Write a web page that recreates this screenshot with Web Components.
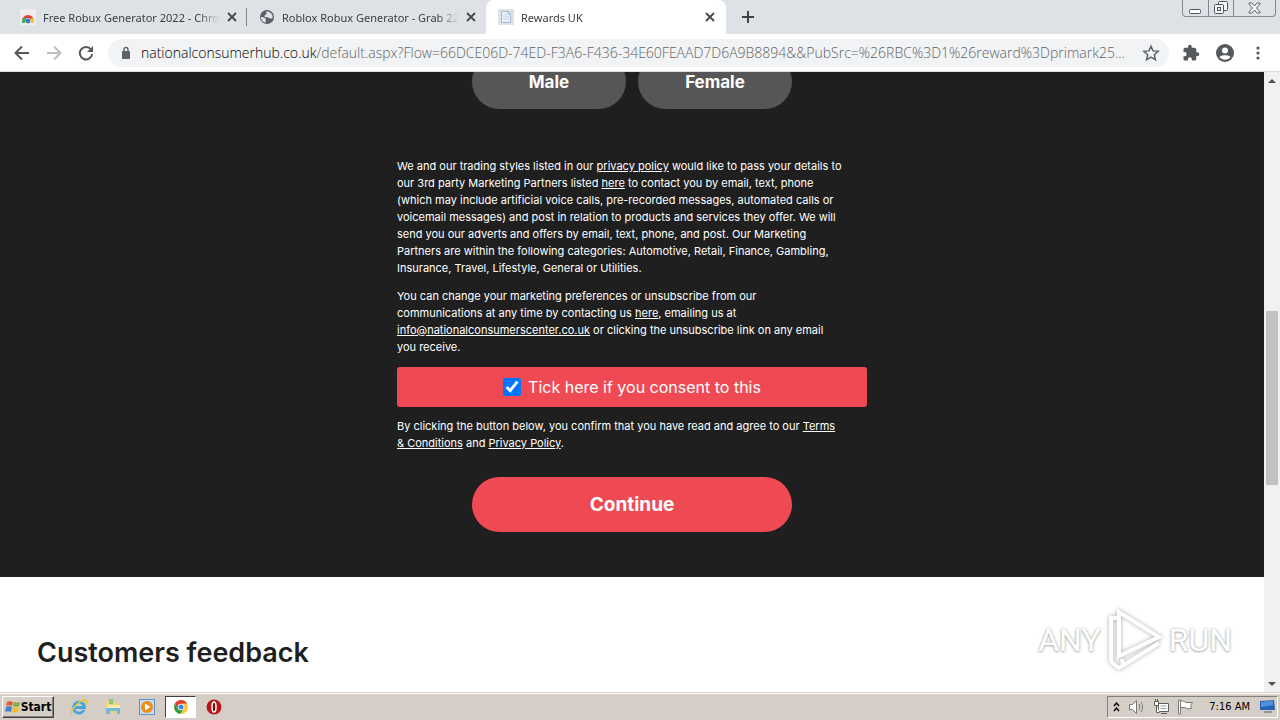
<!DOCTYPE html>
<html lang="en">
<head>
<meta charset="utf-8">
<title>Rewards UK</title>
<style>
  html, body {
    height: 100%;
    margin: 0;
  }
  body {
    display: flex;
    flex-direction: column;
    overflow: hidden;
    font-family: "Noto Sans", sans-serif;
    background: #fff;
  }
</style>
</head>
<body>
<tab-strip>
  <browser-tab>
    <svg slot="icon" width="16" height="16" viewBox="0 0 16 16"><rect width="16" height="16" rx="1" fill="#f1eded"/><path d="M2 12a6 6 0 0 1 12 0H11a3 3 0 0 0-6 0z" fill="#dc4437"/><path d="M2 12c0-2 1-3 2-4l2 3-1 3H2z" fill="#4caf50"/><path d="M14 12c0-1 0-2-1-3l-3 1 1 4h3z" fill="#f6c52e"/><circle cx="8" cy="12" r="2.4" fill="#3c79d8"/></svg>
    Free Robux Generator 2022 - Chrome
  </browser-tab>
  <browser-tab>
    <svg slot="icon" width="16" height="16" viewBox="0 0 16 16"><circle cx="8" cy="8" r="7" fill="#5b5f65"/><path d="M2.500 8c2 0 3 .5 4 1.500s-.5 2 .5 4C4 13.500 2 11 2 8zM7 2.500c0 1.500 1 1.500.500 2.500S5 6 5.500 7.500 9 8 10 9s2.500.500 3.500 0C14.500 5.500 11 2 7 2.500z" fill="#dee1e6"/></svg>
    Roblox Robux Generator - Grab 22.5
  </browser-tab>
  <browser-tab active>
    <svg slot="icon" width="16" height="16" viewBox="0 0 16 16"><rect width="16" height="16" fill="#e2e3e5"/><path d="M3.500 2.500h7l2 2v9h-9z" fill="#e9f3fb" stroke="#a3b6ca"/><path d="M10 3v2h2.500" fill="none" stroke="#a3b6ca"/><path d="M5 6h4M5 8h6M5 10h6" stroke="#c3d9ea"/></svg>
    Rewards UK
  </browser-tab>
</tab-strip>
<address-bar host="nationalconsumerhub.co.uk" path="/default.aspx?Flow=66DCE06D-74ED-F3A6-F436-34E60FEAAD7D6A9B8894&amp;&amp;PubSrc=%26RBC%3D1%26reward%3Dprimark25..."></address-bar>
<page-view>
  <signup-form>
    <pill-button slot="gender" tone="grey">Male</pill-button>
    <pill-button slot="gender" tone="grey">Female</pill-button>
    <pill-button slot="submit" size="large">Continue</pill-button>
  </signup-form>
  <feedback-section>Customers feedback</feedback-section>
  <run-watermark slot="overlay"></run-watermark>
</page-view>
<task-bar></task-bar>

<script>
function define(name, html, setup) {
  const template = document.createElement("template");
  template.innerHTML = html;
  customElements.define(name, class extends HTMLElement {
    constructor() {
      super();
      this.attachShadow({ mode: "open" }).append(template.content.cloneNode(true));
    }

    connectedCallback() {
      if (setup) setup(this, this.shadowRoot);
    }
  });
}

define("browser-tab", `
  <style>
    :host {
      display: flex;
      align-items: center;
      box-sizing: border-box;
      flex: 0 1 239px;
      min-width: 0;
      height: 34px;
      padding: 0 7px 0 12px;
      position: relative;
      font-size: 11px;
      color: #3c4043;
    }
    :host(:not([active]))::after {
      content: "";
      position: absolute;
      right: 0;
      top: 8px;
      width: 1px;
      height: 18px;
      background: #808387;
    }
    :host(:nth-child(2))::after { display: none; }
    :host([active]) {
      flex-basis: 240px;
      padding-right: 8px;
      background: #fff;
      border-radius: 8px 8px 0 0;
    }
    .title {
      flex: 1;
      margin: 0 4px 0 7px;
      overflow: hidden;
      white-space: nowrap;
      -webkit-mask-image: linear-gradient(90deg, #000 88%, transparent);
    }
    button {
      display: flex;
      padding: 3px;
      border: 0;
      background: none;
    }
  </style>
  <slot name="icon"></slot>
  <div class="title"><slot></slot></div>
  <button aria-label="Close tab"><svg width="10" height="10" viewBox="0 0 10 10"><path d="M1 1l8 8M9 1l-8 8" stroke="#45484c" stroke-width="1.800"/></svg></button>
`);

define("tab-strip", `
  <style>
    :host {
      display: flex;
      flex: none;
      height: 34px;
      padding-left: 8px;
      background: #dee1e6;
    }
    button {
      border: 0;
      background: none;
      padding: 0;
    }
    .add {
      display: flex;
      align-items: center;
      margin-left: 16px;
    }
    .window {
      display: flex;
      margin: 0 4px 0 auto;
      height: 16px;
      border: 1px solid #85898f;
      border-top: 0;
      border-radius: 0 0 4px 4px;
    }
    .window button {
      display: grid;
      place-items: center;
      width: 25px;
    }
    .window button + button { border-left: 1px solid #85898f; }
    .window button:last-child { width: 42px; }
  </style>
  <slot></slot>
  <button class="add" aria-label="New tab"><svg width="12" height="12" viewBox="0 0 12 12"><path d="M6 0v12M0 6h12" stroke="#3c4043" stroke-width="2"/></svg></button>
  <div class="window">
    <button aria-label="Minimize"><svg width="13" height="14" viewBox="0 0 13 14"><rect x=".5" y="8.500" width="11" height="4" rx="1" fill="#fff" stroke="#50545a"/></svg></button>
    <button aria-label="Restore"><svg width="14" height="14" viewBox="0 0 14 14" fill="#f5f6f8" stroke="#50545a"><rect x="4.500" y=".5" width="9" height="9" rx="1"/><rect x=".5" y="3.500" width="9" height="9" rx="1"/><rect x="3.500" y="6.500" width="3" height="3"/></svg></button>
    <button aria-label="Close"><svg width="13" height="12" viewBox="0 0 13 12"><path d="M1 1h3l2.500 3L9 1h3v1L8.500 6l3.500 4v1H9L6.500 8 4 11H1v-1l3.500-4L1 2z" fill="#f5f6f8" stroke="#60646a"/></svg></button>
  </div>
`);

define("address-bar", `
  <style>
    :host {
      display: flex;
      flex: none;
      align-items: center;
      box-sizing: border-box;
      height: 38px;
      padding: 0 14px;
      border-bottom: 1px solid #dadce0;
      background: #fff;
    }
    button {
      display: flex;
      border: 0;
      background: none;
      padding: 0;
      margin-right: 16px;
    }
    .url {
      flex: 1;
      display: flex;
      align-items: center;
      min-width: 0;
      height: 28px;
      margin-right: 13px;
      padding: 0 9px 0 10px;
      border-radius: 14px;
      background: #f1f3f4;
      font: 300 14px "Open Sans", sans-serif;
      color: #5f6368;
    }
    .reload { margin-right: 14px; }
    .url span {
      flex: 1;
      margin-left: 7px;
      overflow: hidden;
      white-space: nowrap;
    }
    .url b {
      font-weight: 300;
      color: #000;
    }
    .url i { font-style: normal; }
    .url button, .menu { margin: 0; }
  </style>
  <button aria-label="Back"><svg width="16" height="16" viewBox="0 0 16 16"><path d="M15 8H2M8 1.500L1.500 8 8 14.500" fill="none" stroke="#55585c" stroke-width="2"/></svg></button>
  <button aria-label="Forward"><svg width="16" height="16" viewBox="0 0 16 16"><path d="M1 8h13M8 1.500L14.500 8 8 14.500" fill="none" stroke="#bcbec1" stroke-width="2"/></svg></button>
  <button class="reload" aria-label="Reload"><svg width="16" height="16" viewBox="0 0 16 16"><path d="M13 4.500A6.200 6.200 0 1 0 14.200 9" fill="none" stroke="#55585c" stroke-width="2"/><path d="M15 1v6H9z" fill="#55585c"/></svg></button>
  <div class="url">
    <svg width="16" height="16" viewBox="0 0 16 16"><rect x="4" y="6" width="8" height="8" rx="1" fill="#5f6368"/><path d="M6 7V4.500a2 2 0 0 1 4 0V7" fill="none" stroke="#5f6368" stroke-width="1.400"/></svg>
    <span><b></b><i></i></span>
    <button aria-label="Bookmark"><svg width="18" height="18" viewBox="0 0 24 24"><path d="M12 3l2.700 6.200 6.800.6-5.100 4.500 1.500 6.600-5.900-3.500-5.900 3.500 1.500-6.600L2.500 9.800l6.800-.6z" fill="none" stroke="#5f6368" stroke-width="2"/></svg></button>
  </div>
  <button aria-label="Extensions"><svg width="18" height="18" viewBox="0 0 24 24"><path fill="#55585c" d="M20.500 11H19V7a2 2 0 0 0-2-2h-4V3.500a2.500 2.500 0 0 0-5 0V5H4a2 2 0 0 0-2 2v3.800h1.500a2.700 2.700 0 0 1 0 5.400H2V20a2 2 0 0 0 2 2h3.800v-1.500a2.700 2.700 0 0 1 5.400 0V22H17a2 2 0 0 0 2-2v-4h1.500a2.500 2.500 0 0 0 0-5z"/></svg></button>
  <button aria-label="Profile"><svg width="18" height="18" viewBox="0 0 18 18"><circle cx="9" cy="9" r="9" fill="#55585c"/><circle cx="9" cy="6.500" r="3" fill="#fff"/><path d="M3.500 13c1-2.500 10-2.500 11 0-2.500 3.500-8.500 3.500-11 0z" fill="#fff"/></svg></button>
  <button class="menu" aria-label="Menu"><svg width="16" height="16" viewBox="0 0 16 16" fill="#55585c"><circle cx="8" cy="3" r="1.600"/><circle cx="8" cy="8" r="1.600"/><circle cx="8" cy="13" r="1.600"/></svg></button>
`, (host, root) => {
  root.querySelector("b").textContent = host.getAttribute("host");
  root.querySelector("i").textContent = host.getAttribute("path");
});

define("page-view", `
  <style>
    :host {
      display: flex;
      flex: 1;
      min-height: 0;
      position: relative;
      font-family: Inter, sans-serif;
    }
    .content {
      flex: 1;
      min-width: 0;
      overflow: hidden;
    }
  </style>
  <div class="content"><slot></slot></div>
  <scroll-bar></scroll-bar>
  <slot name="overlay"></slot>
`);

define("scroll-bar", `
  <style>
    :host {
      display: grid;
      grid-template-rows: 17px 222fr 174fr 190fr 17px;
      justify-items: center;
      align-items: center;
      width: 16px;
      background: #f1f1f1;
    }
    .thumb {
      grid-row: 3;
      align-self: stretch;
      width: 12px;
      background: #c1c1c1;
    }
    .down { grid-row: 5; }
  </style>
  <svg width="8" height="4"><path d="M0 4l4-4 4 4z" fill="#505050"/></svg>
  <div class="thumb"></div>
  <svg class="down" width="8" height="4"><path d="M0 0l4 4 4-4z" fill="#505050"/></svg>
`);

define("pill-button", `
  <style>
    :host {
      display: block;
      flex: 1;
    }
    button {
      display: block;
      width: 100%;
      height: 55px;
      border: 0;
      border-radius: 28px;
      background: #ef4a53;
      color: #fff;
      font: 700 17px Inter, sans-serif;
    }
    :host([tone="grey"]) button { background: #565656; }
    :host([size="large"]) button { font-size: 19px; }
  </style>
  <button type="button"><slot></slot></button>
`);

define("signup-form", `
  <style>
    :host {
      display: block;
      /* page is scrolled part way past the gender row */
      margin-top: -18px;
      padding-bottom: 45px;
      background: #1f1f1f;
      color: #fff;
    }
    form {
      max-width: 470px;
      margin: 0 auto;
      font-size: 11px;
      line-height: 17px;
    }
    .row {
      display: flex;
      gap: 12px;
      max-width: 320px;
      margin: 0 auto;
    }
    .gender { margin-bottom: 49px; }
    p {
      margin: 0 0 11px;
      white-space: nowrap;
    }
    a { color: inherit; }
    label {
      display: flex;
      align-items: center;
      justify-content: center;
      gap: 7px;
      height: 40px;
      margin-bottom: 11px;
      border-radius: 3px;
      background: #ef4a53;
      font-size: 16px;
    }
    input {
      width: 18px;
      height: 18px;
      margin: 0;
      accent-color: #0075ff;
    }
    .submit { margin-top: 25px; }
  </style>
  <form>
    <div class="row gender"><slot name="gender"></slot></div>
    <p>We and our trading styles listed in our <a href="#">privacy policy</a> would like to pass your details to<br>
      our 3rd party Marketing Partners listed <a href="#">here</a> to contact you by email, text, phone<br>
      (which may include artificial voice calls, pre-recorded messages, automated calls or<br>
      voicemail messages) and post in relation to products and services they offer. We will<br>
      send you our adverts and offers by email, text, phone, and post. Our Marketing<br>
      Partners are within the following categories: Automotive, Retail, Finance, Gambling,<br>
      Insurance, Travel, Lifestyle, General or Utilities.</p>
    <p>You can change your marketing preferences or unsubscribe from our<br>
      communications at any time by contacting us <a href="#">here</a>, emailing us at<br>
      <a href="#">info@nationalconsumerscenter.co.uk</a> or clicking the unsubscribe link on any email<br>
      you receive.</p>
    <label for="consent"><input id="consent" type="checkbox" checked>Tick here if you consent to this</label>
    <p>By clicking the button below, you confirm that you have read and agree to our <a href="#">Terms<br>
      &amp; Conditions</a> and <a href="#">Privacy Policy</a>.</p>
    <div class="row submit"><slot name="submit"></slot></div>
  </form>
`);

define("feedback-section", `
  <style>
    :host {
      display: block;
      padding: 56px 37px;
      background: #fff;
      color: #1f1f1f;
    }
    h2 {
      margin: 0;
      font-size: 27px;
      line-height: 40px;
      font-weight: 600;
    }
  </style>
  <h2><slot></slot></h2>
`);

define("run-watermark", `
  <style>
    :host {
      position: absolute;
      right: 48px;
      bottom: 20px;
      display: flex;
      align-items: center;
      gap: 6px;
      font: 32px Roboto, sans-serif;
      color: #fff;
      text-shadow: 0 0 3px #aaa, 0 1px 2px #bbb;
    }
    svg { filter: drop-shadow(0 0 2px #aaa); }
  </style>
  <span>ANY</span>
  <svg width="56" height="64" viewBox="0 0 56 64" fill="none" stroke="#fff" stroke-width="4"><path d="M12 4v44l40-19z"/><path d="M10 10H4v44M4 54l8 6L52 35M16 58l-1-7"/></svg>
  <span>RUN</span>
`);

define("task-bar", `
  <style>
    :host {
      display: flex;
      flex: none;
      align-items: center;
      box-sizing: border-box;
      height: 28px;
      padding: 2px;
      border-top: 1px solid #d4d0c8;
      box-shadow: inset 0 1px #fff;
      background: #d4cec6;
      font: 11px "DejaVu Sans Condensed", "DejaVu Sans", sans-serif;
      color: #000;
    }
    button {
      display: flex;
      align-items: center;
      justify-content: center;
      width: 34px;
      height: 22px;
      padding: 0;
      border: 0;
      background: none;
    }
    .start {
      width: 52px;
      margin-right: 8px;
      border: 1px solid;
      border-color: #fff #404040 #404040 #fff;
      box-shadow: inset -1px -1px #808080;
      font: 700 12px "DejaVu Sans Condensed", "DejaVu Sans", sans-serif;
    }
    .current {
      width: 31px;
      margin: 0 1px;
      border: 1px solid;
      border-color: #404040 #fff #fff #404040;
      background: #fff;
    }
    .tray {
      display: flex;
      align-items: center;
      box-sizing: border-box;
      height: 22px;
      margin-left: auto;
      padding: 0 1px 0 5px;
      border: 1px solid;
      border-color: #808080 #fff #fff #808080;
    }
    .tray svg { margin-right: 8px; }
    .tray svg:last-child { margin: 0 0 0 9px; }
    time { margin-left: 7px; }
  </style>
  <button class="start"><svg width="16" height="16" viewBox="0 0 16 16"><path d="M2 3c2-1 4-1 6 0L7 7C5 6 3 6 1 7z" fill="#e3592b"/><path d="M9 3c2 1 4 1 6 0l-1 4c-2 1-4 1-6 0z" fill="#76b041"/><path d="M1 8c2-1 4-1 6 0l-1 5c-2-1-4-1-6 0z" fill="#3f83d6"/><path d="M8 8c2 1 4 1 6 0l-1 5c-2 1-4 1-6 0z" fill="#f7bd2b"/></svg>Start</button>
  <button aria-label="Internet Explorer"><svg width="18" height="18" viewBox="0 0 18 18"><path d="M14 12a5.500 5.500 0 1 1 .5-2.500H5" fill="none" stroke="#45a5dd" stroke-width="2.800"/><path d="M2 16C-1 12 13-1 16.500 2.500c.8 1 .3 2.500-.5 4" fill="none" stroke="#e8c53a" stroke-width="1.500"/></svg></button>
  <button aria-label="Explorer"><svg width="18" height="18" viewBox="0 0 18 18"><path d="M2 3h6l1 2h7v10H2z" fill="#efd577"/><path d="M5 1h4v5H5z" fill="#8fc577"/><path d="M3 7h13v3H3z" fill="#f9edaa"/><path d="M2 10h14v6h-3v-3H6v3H2z" fill="#72b9dd"/></svg></button>
  <button aria-label="Media Player"><svg width="16" height="16" viewBox="0 0 16 16"><rect x=".5" y=".5" width="15" height="15" fill="#c6dcf2" stroke="#5e93cb"/><circle cx="8" cy="8" r="6" fill="#f08c1a"/><path d="M6 4.500v7L11.500 8z" fill="#fff"/></svg></button>
  <button class="current" aria-label="Chrome"><svg width="14" height="14" viewBox="0 0 14 14"><circle cx="7" cy="7" r="7" fill="#fcc934"/><path d="M1 3.500A7 7 0 0 1 13.100 3.600H7L4.200 8.600z" fill="#e33b2e"/><path d="M1 3.500a7 7 0 0 0 5.200 10.400L9.600 8.700H4.200z" fill="#2d9f4c"/><circle cx="7" cy="7" r="3.200" fill="#fff"/><circle cx="7" cy="7" r="2.500" fill="#4285e8"/></svg></button>
  <button aria-label="Opera"><svg width="16" height="16" viewBox="0 0 16 16"><circle cx="8" cy="8" r="7.500" fill="#b5171d"/><ellipse cx="8" cy="8" rx="2" ry="5" fill="#8b0c10" stroke="#fff" stroke-width="1.500"/></svg></button>
  <div class="tray">
    <svg width="7" height="10" viewBox="0 0 7 10"><path d="M1 4l2.500-3L6 4M1 9l2.500-3L6 9" fill="none" stroke="#000" stroke-width="1.400"/></svg>
    <svg width="17" height="16" viewBox="0 0 17 16" fill="none" stroke="#777"><path d="M1.500 5.500h3l4-4v13l-4-4h-3z" fill="#fff"/><path d="M11 5c1 2 1 4 0 6M13 3c2 3 2 7 0 10"/></svg>
    <svg width="16" height="16" viewBox="0 0 16 16" fill="#fff" stroke="#5c5c5c"><path d="M5.500 4.500h10v8h-10zM8 14.500h6"/><path d="M7.500 7h6M7.500 9.500h6" stroke="#999"/><path d="M1.500 2.500h4v4h-4zM2.500 0v2.500M4.500 0v2.500M3.500 6.500v7h3"/></svg>
    <svg width="17" height="16" viewBox="0 0 17 16"><path d="M1.500 1v14h2V1zM3.500 2c3 0 4 0 5 1.500h7l-2 3 1 3c-4 1-5-.5-7-1H3.500z" fill="#fff" stroke="#777"/></svg>
    <time>7:16 AM</time>
    <svg width="17" height="15" viewBox="0 0 17 15"><path d="M1 2l14-1 1 10H1z" fill="#2463b8"/><path d="M2 3l12-1v4L2 8z" fill="#4f93dc"/><path d="M5 13h8" stroke="#8898aa" stroke-width="2"/></svg>
  </div>
`);
</script>
</body>
</html>
